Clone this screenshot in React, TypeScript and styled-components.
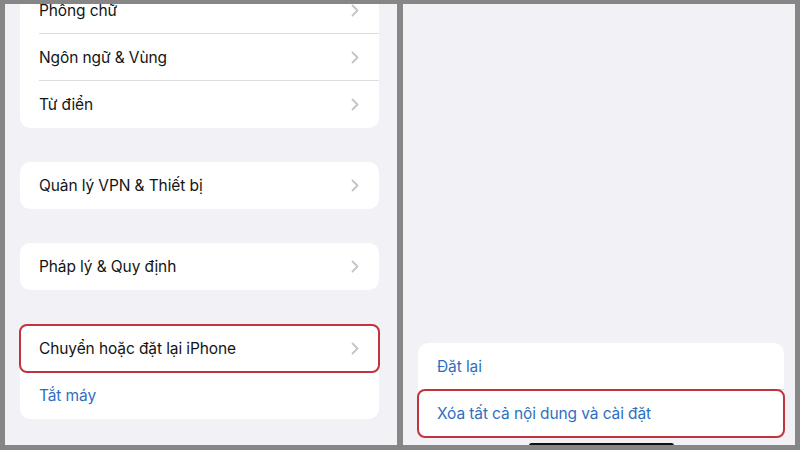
import styled, { createGlobalStyle } from "styled-components";

const GlobalStyle = createGlobalStyle`
    html, body {
        margin: 0;
        padding: 0;
    }
    body {
        background-color: #868686;
        font-family: Inter, "Noto Sans", "Liberation Sans", sans-serif;
    }
`;

const Frame = styled.div`
    display: flex;
    flex-direction: row;
    gap: 6px;
    width: 800px;
    height: 450px;
    box-sizing: border-box;
    padding: 4px 5px 5px 5px;
    background-color: #868686;
`;

const Panel = styled.div<{ $side: "left" | "right" }>`
    flex: none;
    width: 392px;
    box-sizing: border-box;
    display: flex;
    flex-direction: column;
    justify-content: ${(p) => (p.$side === "left" ? "flex-start" : "flex-end")};
    gap: 34px;
    overflow: hidden;
    background-color: #f1f1f6;
    padding: ${(p) => (p.$side === "left" ? "0 18px 0 15px" : "0 11px 0 15px")};
`;

const Card = styled.div<{ $offset?: number }>`
    display: flex;
    flex-direction: column;
    background-color: #ffffff;
    border-radius: 10px;
    margin-top: ${(p) => p.$offset ?? 0}px;
`;

const Row = styled.div<{ $marked?: boolean; $divider?: boolean }>`
    position: relative;
    display: flex;
    flex-direction: row;
    align-items: center;
    justify-content: space-between;
    height: 47px;
    padding: 0 20px 0 19px;
    border-radius: 7px;
    outline: ${(p) => (p.$marked ? "2px solid #c3333b" : "none")};
    outline-offset: -1px;
    z-index: ${(p) => (p.$marked ? 1 : 0)};

    &::after {
        content: "";
        display: ${(p) => (p.$divider ? "block" : "none")};
        position: absolute;
        left: 19px;
        right: 0;
        bottom: 0;
        height: 1px;
        background-color: #dcdce1;
    }
`;

const Label = styled.span<{ $action?: boolean }>`
    font-size: 15.5px;
    letter-spacing: -0.1px;
    color: ${(p) => (p.$action ? "#2f6fbf" : "#141414")};
`;

const HomeBar = styled.div`
    align-self: center;
    width: 145px;
    height: 5px;
    border-radius: 3px;
    background-color: #111111;
    margin-top: -28px;
    margin-bottom: -3px;
`;

const Chevron = () => (
    <svg width="8" height="13" viewBox="0 0 8 13">
        <path d="M1.5 1.5 L6.5 6.5 L1.5 11.5" fill="none" stroke="#c4c4c8" strokeWidth="1.8" strokeLinecap="round" strokeLinejoin="round" />
    </svg>
);

const App = () => {
    return (
        <>
            <GlobalStyle />
            <Frame>
                <Panel $side="left">
                    <Card $offset={-17}>
                        <Row $divider>
                            <Label>Phông chữ</Label>
                            <Chevron />
                        </Row>
                        <Row $divider>
                            <Label>Ngôn ngữ &amp; Vùng</Label>
                            <Chevron />
                        </Row>
                        <Row>
                            <Label>Từ điển</Label>
                            <Chevron />
                        </Row>
                    </Card>
                    <Card>
                        <Row>
                            <Label>Quản lý VPN &amp; Thiết bị</Label>
                            <Chevron />
                        </Row>
                    </Card>
                    <Card>
                        <Row>
                            <Label>Pháp lý &amp; Quy định</Label>
                            <Chevron />
                        </Row>
                    </Card>
                    <Card $offset={1}>
                        <Row $marked>
                            <Label>Chuyển hoặc đặt lại iPhone</Label>
                            <Chevron />
                        </Row>
                        <Row>
                            <Label $action>Tắt máy</Label>
                        </Row>
                    </Card>
                </Panel>
                <Panel $side="right">
                    <Card>
                        <Row $divider>
                            <Label $action>Đặt lại</Label>
                        </Row>
                        <Row $marked>
                            <Label $action>Xóa tất cả nội dung và cài đặt</Label>
                        </Row>
                    </Card>
                    <HomeBar />
                </Panel>
            </Frame>
        </>
    );
};

export default App;
